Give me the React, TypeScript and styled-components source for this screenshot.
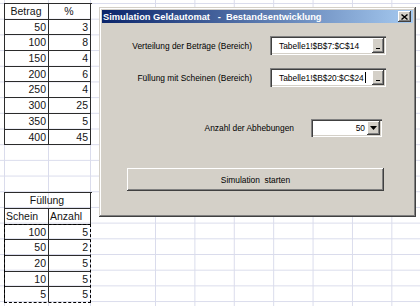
import { Fragment } from "react";
import styled, { createGlobalStyle } from "styled-components";

const GRID = "#dadcec";
const CELL_LINE = "#2b2b2b";
const ROW_H = 15.7;

const GlobalStyle = createGlobalStyle`
  html, body {
    margin: 0;
    padding: 0;
  }
  body {
    width: 420px;
    height: 306px;
    overflow: hidden;
    background: #fff;
    font-family: "Liberation Sans", Arial, sans-serif;
  }
`;

const vLine = (x: number) =>
  `linear-gradient(to right, ${GRID} 0 1px, transparent 1px) ${x}px 0 / 1px 100% no-repeat`;
const hLines = `linear-gradient(to bottom, ${GRID} 0 1px, transparent 1px) 0 3px / 100% ${ROW_H}px repeat-y`;

const Sheet = styled.div`
  position: relative;
  display: flex;
  width: 420px;
  height: 306px;
  overflow: hidden;
`;

const LeftPane = styled.div`
  width: 155px;
  flex-shrink: 0;
  box-sizing: border-box;
  padding: 3px 0 0 4px;
  display: flex;
  flex-direction: column;
  gap: 47px;
  background: ${vLine(4)}, ${vLine(48)}, ${vLine(90)}, ${hLines};
`;

const RightPane = styled.div`
  flex: 1;
  background:
    linear-gradient(to right, ${GRID} 0 1px, transparent 1px) 0 0 / 39.4px 100% repeat-x,
    ${hLines};
`;

const Table = styled.div`
  display: grid;
  grid-template-columns: 44px 42px;
  width: 87px;
  border-top: 1px solid ${CELL_LINE};
  border-left: 1px solid ${CELL_LINE};
`;

const Cell = styled.div<{ $align?: "left" | "center" | "right"; $span?: boolean }>`
  box-sizing: border-box;
  height: ${ROW_H}px;
  line-height: ${ROW_H - 1}px;
  border-right: 1px solid ${CELL_LINE};
  border-bottom: 1px solid ${CELL_LINE};
  padding: 0 2px 0 1px;
  font-size: 10.5px;
  color: #141414;
  text-align: ${(p) => p.$align ?? "right"};
  grid-column: ${(p) => (p.$span ? "1 / -1" : "auto")};
  white-space: nowrap;
  overflow: hidden;
`;

const Marked = styled.div`
  grid-column: 1 / -1;
  display: grid;
  grid-template-columns: 44px 41px;
  margin: -1px 0 0 -1px;
  border: 1px dashed #000;
`;

const MarkedCell = styled(Cell)<{ $last?: boolean; $lastRow?: boolean }>`
  height: ${(p) => (p.$lastRow ? ROW_H - 1 : ROW_H)}px;
  border-right: ${(p) => (p.$last ? "none" : `1px solid ${CELL_LINE}`)};
  border-bottom: ${(p) => (p.$lastRow ? "none" : `1px solid ${CELL_LINE}`)};
`;

const Dialog = styled.div`
  position: absolute;
  left: 99px;
  top: 7px;
  width: 317px;
  height: 210px;
  box-sizing: border-box;
  padding: 3px;
  background: #d4d0c8;
  box-shadow: inset -1px -1px #404040, inset 1px 1px #d4d0c8, inset -2px -2px #808080,
    inset 2px 2px #ffffff;
  display: flex;
  flex-direction: column;
  font-family: "Liberation Sans", Tahoma, sans-serif;
  font-size: 8.4px;
  color: #000;
`;

const TitleBar = styled.div`
  height: 13px;
  flex-shrink: 0;
  display: flex;
  align-items: center;
  justify-content: space-between;
  padding: 0 2px 0 1px;
  background: linear-gradient(to right, #0a246a, #a6caf0);
`;

const Title = styled.span`
  color: #fff;
  font-weight: bold;
  font-size: 9.3px;
  white-space: pre;
`;

const raised = `
  background: #d4d0c8;
  box-shadow: inset -1px -1px #404040, inset 1px 1px #ffffff, inset -2px -2px #808080;
`;

const sunken = `
  background: #fff;
  box-shadow: inset 1px 1px #808080, inset 2px 2px #404040, inset -1px -1px #ffffff,
    inset -2px -2px #d4d0c8;
`;

const CloseButton = styled.div`
  ${raised}
  width: 13px;
  height: 11px;
  display: flex;
  align-items: center;
  justify-content: center;
`;

const Body = styled.div`
  display: flex;
  flex-direction: column;
`;

const Row = styled.div<{ $top: number; $right: number; $gap: number }>`
  display: flex;
  justify-content: flex-end;
  align-items: center;
  margin-top: ${(p) => p.$top}px;
  padding-right: ${(p) => p.$right}px;
  gap: ${(p) => p.$gap}px;
`;

const Label = styled.span`
  white-space: nowrap;
`;

const RangeField = styled.div`
  ${sunken}
  width: 116px;
  height: 19px;
  box-sizing: border-box;
  display: flex;
  align-items: center;
  padding: 0 2px 0 9px;
`;

const FieldText = styled.span`
  white-space: nowrap;
  display: flex;
  align-items: center;
`;

const Caret = styled.span`
  display: inline-block;
  width: 1px;
  height: 11px;
  margin-left: 1px;
  background: #000;
`;

const PickButton = styled.div`
  ${raised}
  margin-left: auto;
  width: 12px;
  height: 15px;
  position: relative;
  &::after {
    content: "";
    position: absolute;
    left: 4px;
    bottom: 4px;
    width: 4px;
    height: 1px;
    background: #000;
  }
`;

const Combo = styled.div`
  ${sunken}
  width: 71px;
  height: 18px;
  box-sizing: border-box;
  display: flex;
  align-items: center;
  padding: 2px;
`;

const ComboValue = styled.span`
  flex: 1;
  text-align: right;
  padding-right: 2px;
`;

const DropButton = styled.div`
  ${raised}
  width: 13px;
  height: 14px;
  display: flex;
  align-items: center;
  justify-content: center;
`;

const StartButton = styled.div`
  ${raised}
  margin: 31px 29px 0 25px;
  height: 23px;
  display: flex;
  align-items: center;
  justify-content: center;
  white-space: pre;
`;

const amounts: [string, string][] = [
  ["50", "3"],
  ["100", "8"],
  ["150", "4"],
  ["200", "6"],
  ["250", "4"],
  ["300", "25"],
  ["350", "5"],
  ["400", "45"],
];

const filling: [string, string][] = [
  ["100", "5"],
  ["50", "2"],
  ["20", "5"],
  ["10", "5"],
  ["5", "5"],
];

export default function App() {
  return (
    <>
      <GlobalStyle />
      <Sheet>
        <LeftPane>
          <Table>
            <Cell $align="center">Betrag</Cell>
            <Cell $align="center">%</Cell>
            {amounts.map(([a, p]) => (
              <Fragment key={a}>
                <Cell>{a}</Cell>
                <Cell>{p}</Cell>
              </Fragment>
            ))}
          </Table>
          <Table>
            <Cell $align="center" $span>
              Füllung
            </Cell>
            <Cell $align="left">Schein</Cell>
            <Cell $align="left">Anzahl</Cell>
            <Marked>
              {filling.map(([s, n], i) => (
                <Fragment key={s}>
                  <MarkedCell $lastRow={i === filling.length - 1}>{s}</MarkedCell>
                  <MarkedCell $last $lastRow={i === filling.length - 1}>
                    {n}
                  </MarkedCell>
                </Fragment>
              ))}
            </Marked>
          </Table>
        </LeftPane>
        <RightPane />

        <Dialog>
          <TitleBar>
            <Title>Simulation Geldautomat   -  Bestandsentwicklung</Title>
            <CloseButton>
              <svg width="7" height="6" viewBox="0 0 7 6">
                <path d="M0.5 0.5 L6.5 5.5 M6.5 0.5 L0.5 5.5" stroke="#000" strokeWidth="1.4" />
              </svg>
            </CloseButton>
          </TitleBar>
          <Body>
            <Row $top={13} $right={27} $gap={18}>
              <Label>Verteilung der Beträge (Bereich)</Label>
              <RangeField>
                <FieldText>Tabelle1!$B$7:$C$14</FieldText>
                <PickButton />
              </RangeField>
            </Row>
            <Row $top={13} $right={27} $gap={18}>
              <Label>Füllung mit Scheinen (Bereich)</Label>
              <RangeField>
                <FieldText>
                  Tabelle1!$B$20:$C$24
                  <Caret />
                </FieldText>
                <PickButton />
              </RangeField>
            </Row>
            <Row $top={32} $right={31} $gap={17}>
              <Label>Anzahl der Abhebungen</Label>
              <Combo>
                <ComboValue>50</ComboValue>
                <DropButton>
                  <svg width="7" height="4" viewBox="0 0 7 4">
                    <path d="M0 0 H7 L3.5 4 Z" fill="#000" />
                  </svg>
                </DropButton>
              </Combo>
            </Row>
            <StartButton>Simulation  starten</StartButton>
          </Body>
        </Dialog>
      </Sheet>
    </>
  );
}
